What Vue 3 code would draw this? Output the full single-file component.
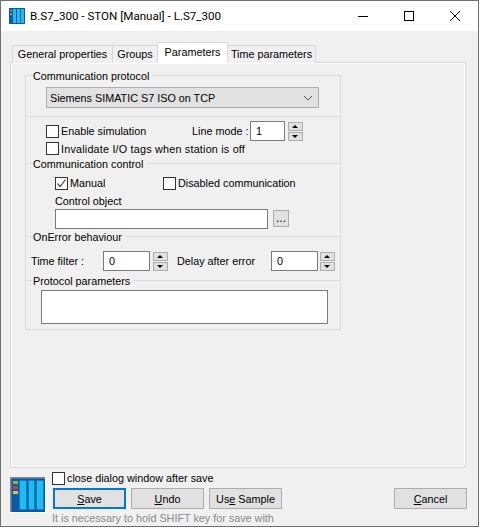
<template>
  <div class="window">
    <header class="titlebar">
      <svg class="app-icon" width="16" height="16" viewBox="0 0 16 16">
        <rect width="16" height="16" fill="#0a5aa5" />
        <rect x="4" y="1" width="3" height="14" fill="#1fbcf2" />
        <rect x="8" y="1" width="3" height="14" fill="#1fbcf2" />
        <rect x="12" y="1" width="3" height="14" fill="#1fbcf2" />
        <rect x="1" y="2" width="2" height="1" fill="#7ac143" />
        <rect x="1" y="4" width="2" height="1" fill="#e2503c" />
        <rect x="1" y="6" width="2" height="1" fill="#e8c53a" />
      </svg>
      <span class="title">B.S7_300 - STON [Manual] - L.S7_300</span>
      <div class="win-controls">
        <svg width="10" height="10" viewBox="0 0 10 10"><path d="M0 5.5H10" stroke="#000" fill="none" /></svg>
        <svg width="10" height="10" viewBox="0 0 10 10"><rect x="0.5" y="0.5" width="9" height="9" stroke="#000" fill="none" /></svg>
        <svg width="10" height="10" viewBox="0 0 10 10"><path d="M0 0L10 10M10 0L0 10" stroke="#000" fill="none" /></svg>
      </div>
    </header>

    <div class="content">
      <div class="tabs">
        <div v-for="tab in tabs" :key="tab.name" class="tab" :class="[tab.cls, { active: tab.name === 'Parameters' }]">{{ tab.name }}</div>
      </div>

      <div class="panel">
        <div class="group">
          <section class="sec-protocol">
            <div class="legend"><span>Communication protocol</span></div>
            <div class="combo">
              <span>Siemens SIMATIC S7 ISO on TCP</span>
              <svg width="10" height="6" viewBox="0 0 10 6"><path d="M1 1L5 5L9 1" stroke="#555" fill="none" /></svg>
            </div>
          </section>

          <section class="sec-sim">
            <div class="row-sim">
              <label class="check c-sim"><i class="box"></i>Enable simulation</label>
              <span class="line-label">Line mode :</span>
              <div class="field f-line">1</div>
              <div class="spin"><b class="up"></b><b class="down"></b></div>
            </div>
            <label class="check invalidate"><i class="box"></i>Invalidate I/O tags when station is off</label>
          </section>

          <section class="sec-control">
            <div class="legend"><span>Communication control</span></div>
            <div class="row-manual">
              <label class="check c-manual">
                <i class="box">
                  <svg width="11" height="11" viewBox="0 0 11 11"><path d="M1.5 5.5L4.2 8.5L9.5 1.5" stroke="#444" stroke-width="1.2" fill="none" /></svg>
                </i>Manual
              </label>
              <label class="check"><i class="box"></i>Disabled communication</label>
            </div>
            <div class="object-label">Control object</div>
            <div class="row-object">
              <div class="field f-object"></div>
              <div class="dots">...</div>
            </div>
          </section>

          <section class="sec-error">
            <div class="legend"><span>OnError behaviour</span></div>
            <div class="row-error">
              <span class="l-time">Time filter :</span>
              <div class="field f-num">0</div>
              <div class="spin"><b class="up"></b><b class="down"></b></div>
              <span class="l-delay">Delay after error</span>
              <div class="field f-num">0</div>
              <div class="spin"><b class="up"></b><b class="down"></b></div>
            </div>
          </section>

          <section class="sec-params">
            <div class="legend"><span>Protocol parameters</span></div>
            <div class="field f-params"></div>
          </section>
        </div>
      </div>

      <footer class="footer">
        <svg class="big-icon" width="36" height="36" viewBox="0 0 36 36">
          <rect width="36" height="36" fill="#fff" />
          <rect x="1" y="1" width="34" height="34" fill="#0a5aa5" />
          <path d="M0.5 35V0.5H35" stroke="#8a8a8a" stroke-width="2" fill="none" />
          <rect x="9.5" y="3.5" width="7" height="29" fill="#1fbcf2" stroke="#0a80c8" />
          <rect x="18.5" y="3.5" width="6" height="29" fill="#1fbcf2" stroke="#0a80c8" />
          <rect x="26.5" y="3.5" width="7" height="29" fill="#1fbcf2" stroke="#0a80c8" />
          <rect x="3" y="4" width="5" height="3" fill="#8fb63c" />
          <rect x="3" y="9" width="5" height="3" fill="#e2303c" />
          <rect x="3" y="14" width="5" height="3" fill="#d9c53a" />
        </svg>
        <div class="footer-main">
          <label class="check close-check"><i class="box"></i>close dialog window after save</label>
          <div class="buttons">
            <button class="btn default"><u>S</u>ave</button>
            <button class="btn"><u>U</u>ndo</button>
            <button class="btn">Us<u>e</u> Sample</button>
            <button class="btn cancel"><u>C</u>ancel</button>
          </div>
          <div class="hint">It is necessary to hold SHIFT key for save with</div>
        </div>
      </footer>
    </div>
  </div>
</template>

<script setup>
const tabs = [
  { name: 'General properties', cls: 't-general' },
  { name: 'Groups', cls: 't-groups' },
  { name: 'Parameters', cls: 't-params' },
  { name: 'Time parameters', cls: 't-time' },
];
</script>

<style>
html,
body {
  margin: 0;
  background: #f0f0f0;
}
</style>

<style scoped>
.window {
  width: 479px;
  height: 527px;
  box-sizing: border-box;
  border: 1px solid #707070;
  background: #f0f0f0;
  font-family: "Liberation Sans", Arial, sans-serif;
  font-size: 10.8px;
  color: #000;
  overflow: hidden;
  display: flex;
  flex-direction: column;
}

.titlebar {
  height: 30px;
  flex-shrink: 0;
  background: #fff;
  display: flex;
  align-items: center;
  padding-left: 8px;
}

.title {
  font-family: Roboto, sans-serif;
  font-size: 11.6px;
  margin-left: 5px;
}

.win-controls {
  margin-left: auto;
  display: flex;
  gap: 36px;
  padding-right: 18px;
}

.content {
  flex: 1;
  padding: 11px 11px 0 9px;
  display: flex;
  flex-direction: column;
}

.tabs {
  display: flex;
  height: 21px;
  padding-left: 2px;
  align-items: flex-end;
  position: relative;
  z-index: 1;
  margin-bottom: -1px;
}

.tab {
  height: 18px;
  line-height: 17px;
  box-sizing: border-box;
  text-align: center;
  border: 1px solid #d9d9d9;
  border-bottom: none;
  margin-left: -1px;
  background: #f0f0f0;
}

.tab:first-child {
  margin-left: 0;
}

.t-general {
  width: 101px;
}

.t-groups {
  width: 46px;
}

.t-params {
  width: 71px;
}

.t-time {
  width: 89px;
}

.tab.active {
  height: 21px;
  background: #fff;
  line-height: 18px;
  position: relative;
}

.panel {
  width: 456px;
  height: 406px;
  box-sizing: border-box;
  border: 1px solid #d9d9d9;
  box-shadow: inset 0 0 0 1px #fff;
  padding: 12px 0 0 14px;
}

.group {
  width: 316px;
  height: 255px;
  box-sizing: border-box;
  border: 1px solid #dcdcdc;
  border-top: none;
}

.legend {
  height: 1px;
  display: flex;
  align-items: center;
  white-space: nowrap;
}

.legend::before {
  content: "";
  width: 7px;
  height: 1px;
  background: #dcdcdc;
}

.legend::after {
  content: "";
  flex: 1;
  height: 1px;
  margin-left: 3px;
  background: #dcdcdc;
}

.sec-protocol {
  height: 41px;
}

.combo {
  margin: 11px 0 0 20px;
  width: 273px;
  height: 21px;
  box-sizing: border-box;
  border: 1px solid #adadad;
  background: #e1e1e1;
  display: flex;
  align-items: center;
  justify-content: space-between;
  padding: 0 5px 0 3px;
}

.sec-sim {
  height: 47px;
  border-top: 1px solid #dcdcdc;
  padding-top: 4px;
  box-sizing: border-box;
}

.check {
  display: flex;
  align-items: center;
  gap: 2px;
  white-space: nowrap;
}

.box {
  width: 13px;
  height: 13px;
  box-sizing: border-box;
  border: 1px solid #333;
  background: #fff;
  display: flex;
  align-items: center;
  justify-content: center;
  flex-shrink: 0;
}

.row-sim {
  display: flex;
  align-items: center;
  padding-left: 20px;
  height: 20px;
}

.c-sim {
  width: 146px;
}

.line-label {
  width: 58px;
  white-space: nowrap;
}

.field {
  box-sizing: border-box;
  border: 1px solid #7a7a7a;
  background: #fff;
  padding: 0 5px;
}

.f-line {
  width: 35px;
  height: 20px;
  line-height: 18px;
}

.spin {
  width: 15px;
  margin-left: 3px;
  display: flex;
  flex-direction: column;
  gap: 1px;
}

.row-error .spin:last-child {
  margin-left: 2px;
}

.spin b {
  height: 9px;
  box-sizing: border-box;
  border: 1px solid #adadad;
  background: #e1e1e1;
  display: block;
  position: relative;
}

.spin b::after {
  content: "";
  position: absolute;
  left: 3px;
  top: 2px;
  border-left: 3px solid transparent;
  border-right: 3px solid transparent;
}

.spin .up::after {
  border-bottom: 3px solid #000;
}

.spin .down::after {
  border-top: 3px solid #000;
}

.invalidate {
  padding-left: 20px;
  height: 15px;
  letter-spacing: 0.2px;
}

.sec-control {
  height: 73px;
}

.row-manual {
  margin-top: 12px;
  padding-left: 29px;
  display: flex;
  height: 14px;
}

.c-manual {
  width: 108px;
}

.object-label {
  margin: 5px 0 0 29px;
  height: 13px;
  line-height: 13px;
}

.row-object {
  margin: 1px 0 0 29px;
  display: flex;
  align-items: flex-start;
}

.f-object {
  width: 213px;
  height: 20px;
}

.dots {
  width: 16px;
  height: 17px;
  margin: 1px 0 0 5px;
  box-sizing: border-box;
  border: 1px solid #adadad;
  background: #e1e1e1;
  text-align: center;
  font-size: 12px;
  line-height: 15px;
}

.sec-error {
  height: 44px;
}

.row-error {
  margin-top: 14px;
  padding-left: 5px;
  display: flex;
  align-items: center;
}

.l-time {
  width: 72px;
}

.l-delay {
  margin-left: 9px;
  width: 94px;
}

.f-num {
  width: 47px;
  height: 20px;
  line-height: 19px;
}

.f-params {
  margin: 9px 0 0 15px;
  width: 287px;
  height: 34px;
}

.footer {
  display: flex;
}

.big-icon {
  margin-top: 9px;
  flex-shrink: 0;
}

.footer-main {
  margin-left: 6px;
  flex: 1;
}

.close-check {
  margin-top: 3px;
  height: 14px;
}

.buttons {
  margin-top: 3px;
  display: flex;
  gap: 5px;
  padding-left: 1px;
}

.btn {
  width: 73px;
  height: 21px;
  padding: 0;
  box-sizing: border-box;
  border: 1px solid #adadad;
  background: #e1e1e1;
  font: inherit;
  color: #000;
}

.btn.default {
  border: 2px solid #0078d7;
}

.btn.cancel {
  margin-left: auto;
}

.hint {
  color: #8a8a8a;
  margin-top: 3px;
  white-space: nowrap;
}
</style>
